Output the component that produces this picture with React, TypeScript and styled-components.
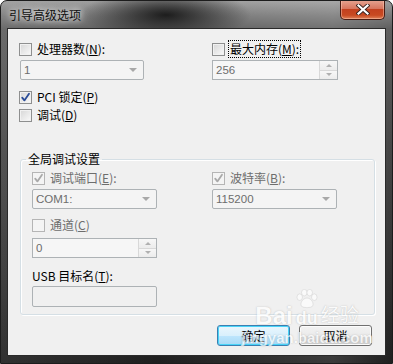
import React from "react";
import styled, { createGlobalStyle } from "styled-components";

const GlobalStyle = createGlobalStyle`
  html, body {
    margin: 0;
    padding: 0;
    background: #ffffff;
    overflow: hidden;
  }
`;

const UI_FONT = `"Noto Sans CJK SC", "Liberation Sans", sans-serif`;
const VALUE_FONT = `"Liberation Sans", "Noto Sans CJK SC", sans-serif`;

const Window = styled.div`
  position: relative;
  box-sizing: border-box;
  width: 393px;
  height: 364px;
  display: flex;
  flex-direction: column;
  border: 1px solid #1c1c1c;
  border-radius: 7px 7px 0 0;
  overflow: hidden;
  font-family: ${UI_FONT};
  background:
    radial-gradient(ellipse 85px 26px at 165px 14px, rgba(24, 24, 24, 0.95), rgba(24, 24, 24, 0) 100%),
    linear-gradient(90deg, rgba(255, 255, 255, 0.08) 0%, rgba(0, 0, 0, 0) 40%, rgba(255, 255, 255, 0.12) 85%, rgba(0, 0, 0, 0) 100%),
    linear-gradient(180deg, #9c9c9c 0px, #7a7a7a 14px, #5e5e5e 28px, #474747 140px, #2c2c2c 300px, #1f1f1f 100%);
`;

const TitleBar = styled.div`
  height: 27px;
  display: flex;
  align-items: flex-start;
  padding-left: 8px;
`;

const Title = styled.span`
  margin-top: 6px;
  font-size: 12px;
  line-height: 16px;
  color: #101010;
  text-shadow: 0 0 6px rgba(255, 255, 255, 0.95), 0 0 10px rgba(255, 255, 255, 0.7);
`;

const CloseButton = styled.div`
  margin: -1px 7px 0 auto;
  width: 45px;
  height: 20px;
  box-sizing: border-box;
  display: flex;
  align-items: center;
  justify-content: center;
  border: 1px solid #4a1d14;
  border-top: none;
  border-radius: 0 0 5px 5px;
  background: linear-gradient(180deg, #e6a593 0%, #d7765f 45%, #c3411f 50%, #c84a22 80%, #e0825a 100%);
  box-shadow: inset 0 0 0 1px rgba(255, 210, 190, 0.45);
`;

const Body = styled.div`
  flex: 1;
  margin: 0 6px 7px 6px;
  border: 1px solid #2a2a2a;
  background: #f0f0f0;
  padding: 12px 12px 0 11px;
  display: flex;
  flex-direction: column;
  color: #000;
`;

const TwoCols = styled.div<{ $first: number }>`
  display: grid;
  grid-template-columns: ${(p) => p.$first}px 1fr;
  grid-template-rows: 16px 20px;
  row-gap: 3px;
`;

const CheckRow = styled.label<{ $top?: number; $disabled?: boolean }>`
  display: flex;
  align-items: center;
  gap: 4px;
  height: 16px;
  margin-top: ${(p) => p.$top ?? 0}px;
  font-size: 12px;
  line-height: 16px;
  color: ${(p) => (p.$disabled ? "#6d6d6d" : "#000")};
  white-space: nowrap;
`;

const Box = styled.span<{ $disabled?: boolean }>`
  box-sizing: border-box;
  width: 13px;
  height: 13px;
  flex: none;
  display: flex;
  align-items: center;
  justify-content: center;
  border: 1px solid ${(p) => (p.$disabled ? "#b5b5b5" : "#8e8f8f")};
  background: ${(p) =>
    p.$disabled
      ? "#f4f4f4"
      : "linear-gradient(135deg, #d6d6d6 0%, #e8e8e8 50%, #fafafa 100%)"};
  box-shadow: inset 0 0 0 1px ${(p) => (p.$disabled ? "#f4f4f4" : "#f1f1f1")};
`;

const LabelText = styled.span<{ $focus?: boolean }>`
  outline: ${(p) => (p.$focus ? "1px dotted #000" : "none")};
  outline-offset: 0;
  padding: 0 1px;
`;

const Field = styled.div<{ $width: number; $left?: number }>`
  box-sizing: border-box;
  width: ${(p) => p.$width}px;
  height: 20px;
  margin-left: ${(p) => p.$left ?? 0}px;
  display: flex;
  align-items: center;
  border: 1px solid #adb2b5;
  border-radius: 2px;
  background: #f4f4f4;
  font-family: ${VALUE_FONT};
  font-size: 11.5px;
  color: #6d6d6d;
  padding-left: 3px;
`;

const FieldValue = styled.span`
  flex: 1;
`;

const ComboArrow = styled.span`
  width: 0;
  height: 0;
  margin-right: 6px;
  border-left: 4px solid transparent;
  border-right: 4px solid transparent;
  border-top: 4px solid #a8a8a8;
`;

const SpinField = styled(Field)`
  border-radius: 0;
  padding-right: 0;
  background: #f6f6f6;
`;

const SpinButtons = styled.div`
  width: 17px;
  align-self: stretch;
  display: flex;
  flex-direction: column;
  border-left: 1px solid #d8d8d8;
`;

const SpinHalf = styled.div<{ $down?: boolean }>`
  flex: 1;
  display: flex;
  align-items: center;
  justify-content: center;
  border-top: ${(p) => (p.$down ? "1px solid #d8d8d8" : "none")};
  background: linear-gradient(180deg, #f7f7f7, #ececec);
  &::after {
    content: "";
    width: 0;
    height: 0;
    border-left: 3px solid transparent;
    border-right: 3px solid transparent;
    ${(p) =>
      p.$down ? "border-top: 3px solid #b0b0b0;" : "border-bottom: 3px solid #b0b0b0;"}
  }
`;

const Group = styled.fieldset`
  box-sizing: border-box;
  width: 355px;
  margin: 28px 0 0 1px;
  padding: 3px 11px 7px 11px;
  min-inline-size: 0;
  border: 1px solid #d5dfe5;
  border-radius: 3px;
  box-shadow: inset 1px 1px 0 #ffffff, 1px 1px 0 #ffffff;
`;

const Legend = styled.legend`
  margin-left: -6px;
  padding: 0 2px;
  font-size: 12px;
  line-height: 16px;
  color: #000;
`;

const PlainLabel = styled.div<{ $top: number }>`
  margin-top: ${(p) => p.$top}px;
  height: 16px;
  font-size: 12px;
  line-height: 16px;
`;

const Spacer = styled.div<{ $h: number }>`
  height: ${(p) => p.$h}px;
`;

const TextInput = styled.div`
  box-sizing: border-box;
  width: 125px;
  height: 21px;
  margin-top: 2px;
  border: 1px solid #adb2b5;
  border-radius: 2px;
  background: #f0f0f0;
`;

const ButtonRow = styled.div`
  display: flex;
  justify-content: flex-end;
  gap: 9px;
  margin-top: 10px;
  padding-right: 1px;
`;

const Button = styled.div<{ $default?: boolean }>`
  box-sizing: border-box;
  width: 73px;
  height: 21px;
  display: flex;
  align-items: center;
  justify-content: center;
  font-size: 12px;
  color: #000;
  border-radius: 3px;
  border: 1px solid ${(p) => (p.$default ? "#3c7fb1" : "#707070")};
  background: ${(p) =>
    p.$default
      ? "linear-gradient(180deg, #eaf6fd 0%, #d9f0fc 50%, #bee6fd 51%, #a7d9f5 100%)"
      : "linear-gradient(180deg, #f2f2f2 0%, #ebebeb 50%, #dddddd 51%, #cfcfcf 100%)"};
  box-shadow: inset 0 0 0 1px ${(p) => (p.$default ? "#48d4f8" : "#fcfcfc")};
`;

/* baidu watermark laid over the dialog corner */
const Watermark = styled.div`
  position: absolute;
  left: 245px;
  top: 288px;
  width: 122px;
  pointer-events: none;
  display: flex;
  flex-direction: column;
  align-items: center;
  opacity: 0.7;
  color: #ffffff;
  text-shadow: 0 0 1px rgba(110, 110, 110, 0.4), 0 0 2px rgba(110, 110, 110, 0.25);
  font-family: "Liberation Sans", "Noto Sans CJK SC", sans-serif;
`;

const WaterLogo = styled.div`
  display: flex;
  align-items: flex-end;
  font-size: 24px;
  font-weight: bold;
  line-height: 22px;
`;

const WaterDu = styled.span`
  display: flex;
  flex-direction: column;
  align-items: center;
  margin: 0 2px;
  font-size: 18px;
  line-height: 18px;
`;

const WaterCn = styled.span`
  font-size: 19px;
  font-weight: normal;
  line-height: 22px;
`;

const WaterUrl = styled.div`
  margin-top: 3px;
  font-size: 15px;
  line-height: 15px;
  font-weight: bold;
`;

const Check: React.FC<{ disabled?: boolean }> = ({ disabled }) => (
  <svg width="11" height="11" viewBox="0 0 11 11">
    <path
      d="M2.2 5.6 L4.4 8.4 L9 1.8"
      fill="none"
      stroke={disabled ? "#a9a9a9" : "#2a4c97"}
      strokeWidth="1.8"
      strokeLinecap="round"
      strokeLinejoin="round"
    />
  </svg>
);

const CheckBox: React.FC<{
  label: React.ReactNode;
  checked?: boolean;
  disabled?: boolean;
  focus?: boolean;
  top?: number;
}> = ({ label, checked, disabled, focus, top }) => (
  <CheckRow $top={top} $disabled={disabled}>
    <Box $disabled={disabled}>{checked && <Check disabled={disabled} />}</Box>
    <LabelText $focus={focus}>{label}</LabelText>
  </CheckRow>
);

const Combo: React.FC<{ value: string; width: number; left?: number }> = ({
  value,
  width,
  left,
}) => (
  <Field $width={width} $left={left}>
    <FieldValue>{value}</FieldValue>
    <ComboArrow />
  </Field>
);

const Spin: React.FC<{ value: string; width: number }> = ({ value, width }) => (
  <SpinField $width={width}>
    <FieldValue>{value}</FieldValue>
    <SpinButtons>
      <SpinHalf />
      <SpinHalf $down />
    </SpinButtons>
  </SpinField>
);

const Paw = () => (
  <svg width="24" height="20" viewBox="0 0 26 22">
    <g fill="#ffffff" stroke="rgba(140,140,140,0.35)" strokeWidth="0.8">
      <ellipse cx="5" cy="9" rx="3" ry="3.6" />
      <ellipse cx="10" cy="4" rx="3" ry="3.6" />
      <ellipse cx="16" cy="4" rx="3" ry="3.6" />
      <ellipse cx="21" cy="9" rx="3" ry="3.6" />
      <path d="M13 10 C 8 10 5 16 7 19 C 9 21 17 21 19 19 C 21 16 18 10 13 10 Z" />
    </g>
  </svg>
);

const u = (c: string) => <u>{c}</u>;

const App: React.FC = () => {
  return (
    <>
      <GlobalStyle />
      <Window>
        <TitleBar>
          <Title>引导高级选项</Title>
          <CloseButton>
            <svg width="14" height="11" viewBox="0 0 14 11">
              <path d="M2.5 1.5 L11.5 9.5 M11.5 1.5 L2.5 9.5" stroke="#3a2420" strokeWidth="4" strokeLinecap="square" />
              <path d="M2.5 1.5 L11.5 9.5 M11.5 1.5 L2.5 9.5" stroke="#ffffff" strokeWidth="2.2" strokeLinecap="square" />
            </svg>
          </CloseButton>
        </TitleBar>
        <Body>
          <TwoCols $first={193}>
            <CheckBox label={<>处理器数({u("N")}):</>} />
            <CheckBox label={<>最大内存({u("M")}):</>} focus />
            <Combo value="1" width={124} left={1} />
            <Spin value="256" width={126} />
          </TwoCols>
          <CheckBox label={<>PCI 锁定({u("P")})</>} checked top={9} />
          <CheckBox label={<>调试({u("D")})</>} top={2} />

          <Group>
            <Legend>全局调试设置</Legend>
            <TwoCols $first={180}>
              <CheckBox label={<>调试端口({u("E")}):</>} checked disabled />
              <CheckBox label={<>波特率({u("B")}):</>} checked disabled />
              <Combo value="COM1:" width={125} />
              <Combo value="115200" width={125} />
            </TwoCols>
            <CheckBox label={<>通道({u("C")})</>} disabled top={8} />
            <Spacer $h={5} />
            <Spin value="0" width={125} />
            <PlainLabel $top={10}>USB 目标名({u("T")}):</PlainLabel>
            <TextInput />
          </Group>

          <ButtonRow>
            <Button $default>确定</Button>
            <Button>取消</Button>
          </ButtonRow>
        </Body>
        <Watermark>
          <WaterLogo>
            Bai
            <WaterDu>
              <Paw />
              du
            </WaterDu>
            <WaterCn>经验</WaterCn>
          </WaterLogo>
          <WaterUrl>jingyan.baidu.com</WaterUrl>
        </Watermark>
      </Window>
    </>
  );
};

export default App;
